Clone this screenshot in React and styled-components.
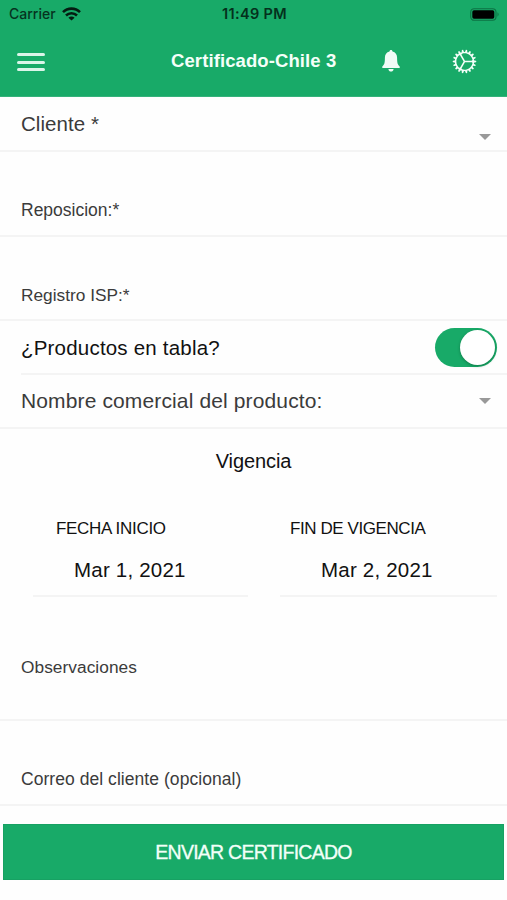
import React from "react";
import styled, { createGlobalStyle } from "styled-components";
import { IoIosCog } from "react-icons/io";

const GREEN = "#18aa68";

const GlobalStyle = createGlobalStyle`
  * { box-sizing: border-box; }
  body { margin: 0; background: #fff; }
  button { font: inherit; border: 0; padding: 0; background: none; color: inherit; }
`;

const Screen = styled.div`
  width: 507px;
  height: 900px;
  overflow: hidden;
  display: flex;
  flex-direction: column;
  background: #fefefe;
  color: #000;
  font-family: "Liberation Sans", Arial, sans-serif;
`;

const Header = styled.header`
  height: 97px;
  flex: none;
  background: ${GREEN};
  border-bottom: 1px solid #35b27b;
`;

const StatusBar = styled.div`
  height: 28px;
  display: grid;
  grid-template-columns: 1fr auto 1fr;
  align-items: center;
  padding: 0 7px 0 9px;
  color: #06331f;
`;

const Carrier = styled.div`
  display: flex;
  align-items: center;
  gap: 6px;
  font: 500 14px/18px Inter, sans-serif;
`;

const Clock = styled.div`
  font: 600 14.5px/18px Inter, sans-serif;
  letter-spacing: 0.35px;
  color: #04301c;
`;

const BatteryIcon = styled.svg`
  justify-self: end;
`;

const NavBar = styled.div`
  height: 68px;
  display: grid;
  grid-template-columns: 171px 166px 1fr;
  align-items: center;
  padding-bottom: 2px;
  color: #f4fff9;
`;

const MenuButton = styled.button`
  width: 29px;
  height: 18px;
  margin: 2px 0 0 17px;
  display: flex;
  flex-direction: column;
  justify-content: space-between;
`;

const MenuLine = styled.span`
  width: 28px;
  height: 3px;
  border-radius: 1.5px;
  background: #dbf5e9;
`;

const Title = styled.h1`
  margin: 0;
  font-size: 18.5px;
  line-height: 22px;
  white-space: nowrap;
  letter-spacing: 0.1px;
`;

const Actions = styled.div`
  display: flex;
  align-items: center;
  gap: 50px;
  padding-left: 45px;

  button { display: flex; }
`;

const Form = styled.form`
  display: flex;
  flex-direction: column;
`;

const Row = styled.div`
  height: ${(p) => p.$height}px;
  display: flex;
  align-items: ${(p) => p.$align || "center"};
  justify-content: space-between;
  margin-left: ${(p) => (p.$inset ? 21 : 0)}px;
  padding: ${(p) => p.$top || 0}px 10px ${(p) => p.$bottom || 0}px ${(p) => (p.$inset ? 0 : 21)}px;
  border-bottom: 2px solid #f4f4f4;
`;

const Label = styled.label`
  font-size: ${(p) => p.$size}px;
  line-height: 24px;
  letter-spacing: ${(p) => p.$spacing || 0}px;
  color: ${(p) => (p.$strong ? "#111" : "#3b3b3b")};
  white-space: nowrap;
`;

const Caret = styled.span`
  width: 0;
  height: 0;
  margin: ${(p) => p.$top || 0}px 6px 0 0;
  border: 6px solid transparent;
  border-top-color: #999;
  border-bottom: 0;
`;

const Toggle = styled.button`
  width: 62px;
  height: 39px;
  border-radius: 20px;
  background: ${GREEN};
  display: flex;
  align-items: center;
  justify-content: flex-end;
  padding-right: 2px;
`;

const Knob = styled.span`
  width: 35px;
  height: 35px;
  border-radius: 50%;
  background: #fff;
  box-shadow: 0 1px 3px rgba(0, 50, 25, 0.4);
`;

const SectionTitle = styled.h2`
  margin: 0;
  padding-top: 19px;
  height: 86px;
  text-align: center;
  font-size: 20px;
  font-weight: 400;
  line-height: 26px;
  letter-spacing: -0.1px;
  color: #111;
`;

const Dates = styled.div`
  display: grid;
  grid-template-columns: 215px 217px;
  column-gap: 32px;
  margin-left: 33px;
  height: 82px;
`;

const DateField = styled.div`
  border-bottom: 2px solid #f4f4f4;
  color: #111;
`;

const DateLabel = styled.div`
  padding-left: ${(p) => p.$left}px;
  font-size: 17px;
  line-height: 28px;
  letter-spacing: ${(p) => p.$spacing}px;
  white-space: nowrap;
`;

const DateValue = styled.div`
  padding: 13px 0 0 41px;
  font-size: 20.5px;
  line-height: 28px;
  letter-spacing: 0.2px;
  white-space: nowrap;
`;

const Submit = styled.button`
  && {
    margin: 18px 3px 0;
    height: 56px;
    background: ${GREEN};
    border: 1px solid #17a163;
    color: #f2fff8;
    font-size: 19.5px;
    letter-spacing: -0.75px;
    -webkit-text-stroke: 0.3px #f2fff8;
  }
`;

function Wifi() {
  return (
    <svg width="19" height="14" viewBox="0 0 19 14" fill="none" stroke="#041c11" strokeWidth="2.6">
      <path d="M1 5.1C5.7.4 13.3.4 18 5.1" />
      <path d="M4 8.5c3.1-3 7.9-3 11 0" />
      <path d="M9.5 13.5 6.4 10.7c1.8-1.7 4.4-1.7 6.2 0z" fill="#041c11" stroke="none" />
    </svg>
  );
}

function Battery() {
  return (
    <BatteryIcon width="30" height="13" viewBox="0 0 30 13">
      <rect x=".7" y=".7" width="25.3" height="11.6" rx="3.5" fill="none" stroke="#0c7143" strokeWidth="1.1" />
      <rect x="2.3" y="2.2" width="22" height="8.6" rx="1.7" fill="#000" />
      <path d="M27.5 4.3q2.2 2.2 0 4.4z" fill="#0c7143" />
    </BatteryIcon>
  );
}

function Bell() {
  return (
    <svg width="18" height="22" viewBox="0 0 18 22" fill="#f0fbf6">
      <path d="M9 0c.9 0 1.5.6 1.5 1.6 3 .8 4.6 3.1 4.6 6.2 0 5.3.5 6.9 2.6 8.8V18H.3v-1.4c2.100-1.900 2.600-3.500 2.600-8.800 0-3.100 1.600-5.400 4.600-6.200C7.500.6 8.100 0 9 0z" />
      <path d="M6.400 19h5.200c-.3 1.800-1.200 2.600-2.600 2.600s-2.300-.8-2.600-2.600z" />
    </svg>
  );
}

export default function App() {
  return (
    <Screen>
      <GlobalStyle />
      <Header>
        <StatusBar>
          <Carrier>Carrier<Wifi /></Carrier>
          <Clock>11:49 PM</Clock>
          <Battery />
        </StatusBar>
        <NavBar>
          <MenuButton aria-label="Menú"><MenuLine /><MenuLine /><MenuLine /></MenuButton>
          <Title>Certificado-Chile 3</Title>
          <Actions>
            <button aria-label="Notificaciones"><Bell /></button>
            <button aria-label="Ajustes"><IoIosCog size={29} /></button>
          </Actions>
        </NavBar>
      </Header>
      <Form onSubmit={(e) => e.preventDefault()}>
        <Row $height={55}>
          <Label $size={20.5} $spacing={0.05}>Cliente *</Label>
          <Caret $top={26} />
        </Row>
        <Row $height={85} $align="flex-end" $bottom={13}>
          <Label $size={17.5} $spacing={0}>Reposicion:*</Label>
        </Row>
        <Row $height={84} $align="flex-end" $bottom={12}>
          <Label $size={17.3} $spacing={0}>Registro ISP:*</Label>
        </Row>
        <Row $height={54} $inset $top={1}>
          <Label $size={20.5} $spacing={0.2} $strong>¿Productos en tabla?</Label>
          <Toggle type="button" role="switch" aria-checked="true" aria-label="Productos en tabla"><Knob /></Toggle>
        </Row>
        <Row $height={54}>
          <Label $size={21} $spacing={0.13}>Nombre comercial del producto:</Label>
          <Caret />
        </Row>
        <SectionTitle>Vigencia</SectionTitle>
        <Dates>
          <DateField>
            <DateLabel $left={23} $spacing={-0.3}>FECHA INICIO</DateLabel>
            <DateValue>Mar 1, 2021</DateValue>
          </DateField>
          <DateField>
            <DateLabel $left={10} $spacing={-0.42}>FIN DE VIGENCIA</DateLabel>
            <DateValue>Mar 2, 2021</DateValue>
          </DateField>
        </Dates>
        <Row $height={124} $align="flex-end" $bottom={40}>
          <Label $size={17.3} $spacing={0.05}>Observaciones</Label>
        </Row>
        <Row $height={85} $align="flex-end" $bottom={13}>
          <Label $size={17.5} $spacing={0.05}>Correo del cliente (opcional)</Label>
        </Row>
        <Submit type="submit">ENVIAR CERTIFICADO</Submit>
      </Form>
    </Screen>
  );
}
